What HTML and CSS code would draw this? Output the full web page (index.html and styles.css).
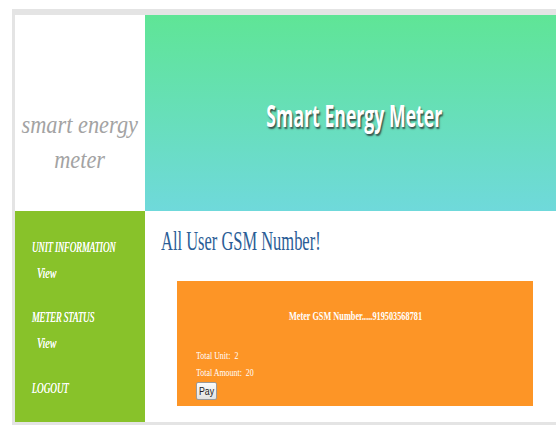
FILE: index.html
```html
<!DOCTYPE html>
<html lang="en">
<head>
<meta charset="utf-8">
<title>Smart Energy Meter</title>
<link rel="stylesheet" href="styles.css">
</head>
<body>
<div class="page">
  <div class="top">
    <div class="logo">
      <span class="logo-line">smart energy</span>
      <span class="logo-line">meter</span>
    </div>
    <header class="banner">
      <h1 class="banner-title">Smart Energy Meter</h1>
    </header>
  </div>
  <div class="body-row">
    <nav class="sidebar">
      <a class="nav-head nav-first" href="#"><span class="sq">UNIT INFORMATION</span></a>
      <a class="nav-sub" href="#"><span class="sq sq-wide">View</span></a>
      <a class="nav-head" href="#"><span class="sq">METER STATUS</span></a>
      <a class="nav-sub" href="#"><span class="sq sq-wide">View</span></a>
      <a class="nav-head nav-last" href="#"><span class="sq">LOGOUT</span></a>
    </nav>
    <main class="content">
      <h2 class="title"><span class="sq">All User GSM Number!</span></h2>
      <section class="meter-card">
        <p class="gsm"><span class="sq-c">Meter GSM Number.....919503568781</span></p>
        <p class="stat"><span class="sq sq-wide">Total Unit:&nbsp;&nbsp;2</span></p>
        <p class="stat"><span class="sq sq-wide">Total Amount:&nbsp;&nbsp;20</span></p>
        <button class="pay" type="button"><span class="sq-b">Pay</span></button>
      </section>
    </main>
  </div>
</div>
</body>
</html>
```

FILE: styles.css
```css
html, body {
  margin: 0;
  padding: 0;
  overflow: hidden;
  background: #ffffff;
}

body {
  font-family: "Liberation Serif", serif;
}

.page {
  margin: 9px 0 0 12px;
  width: 549px;
  border-style: solid;
  border-color: #e4e4e4;
  border-width: 6px 3px 3px 3px;
  background: #ffffff;
}

/* narrow faces */
.sq {
  display: inline-block;
  transform: scaleX(0.61);
  transform-origin: left center;
  white-space: nowrap;
}

.sq-wide {
  transform: scaleX(0.72);
}

.sq-c {
  display: inline-block;
  transform: scaleX(0.69);
  transform-origin: center center;
  white-space: nowrap;
}

.sq-b {
  display: inline-block;
  transform: scaleX(0.8);
  transform-origin: center center;
}

/* top band */
.top {
  display: flex;
  height: 196px;
}

.logo {
  width: 130px;
  box-sizing: border-box;
  padding-top: 92px;
  display: flex;
  flex-direction: column;
  align-items: center;
  font-style: italic;
  font-size: 26px;
  line-height: 35px;
  color: #a3a3a3;
}

.logo-line {
  display: block;
  white-space: nowrap;
  transform: scaleX(0.86);
}

.banner {
  flex: 1;
  display: flex;
  align-items: center;
  justify-content: center;
  background: linear-gradient(to bottom, #5fe596 0%, #6fd9db 100%);
}

.banner-title {
  margin: 0;
  padding-top: 3px;
  font-family: "Open Sans", sans-serif;
  font-weight: 700;
  font-size: 31px;
  line-height: 40px;
  color: #ffffff;
  white-space: nowrap;
  transform: scaleX(0.57);
  text-shadow: 2px 2px 2px rgba(40, 40, 40, 0.75);
}

/* lower band */
.body-row {
  display: flex;
  height: 211px;
}

.sidebar {
  width: 130px;
  flex: none;
  box-sizing: border-box;
  padding: 27px 0 0 17px;
  background: #88c22a;
  display: flex;
  flex-direction: column;
  align-items: flex-start;
}

.sidebar a {
  color: #ffffff;
  text-decoration: none;
  font-style: italic;
  display: block;
  line-height: 18px;
  text-shadow: 0 0 0.4px #ffffff;
}

.nav-head {
  font-size: 15px;
  margin-top: 25px;
}

.nav-first {
  margin-top: 0;
}

.nav-last {
  margin-top: 26px;
}

.nav-sub {
  font-size: 14px;
  margin-top: 9px;
  margin-left: 5px;
}

.content {
  flex: 1;
  padding: 15px 31px 0 32px;
}

.title {
  margin: 0 0 0 -16px;
  font-weight: 400;
  font-size: 27px;
  line-height: 30px;
  color: #2b5d96;
}

.meter-card {
  margin-top: 25px;
  background: #fd9526;
  color: #ffffff;
  padding: 28px 19px 6px 19px;
  height: 125px;
  box-sizing: border-box;
}

.meter-card p {
  margin: 0;
}

.gsm {
  text-align: center;
  font-weight: 700;
  font-size: 12px;
  line-height: 14px;
  margin-bottom: 24px !important;
}

.stat {
  font-size: 11px;
  line-height: 17px;
}

.pay {
  display: block;
  margin-top: 1px;
  width: 21px;
  height: 18px;
  padding: 0;
  font-family: "Liberation Sans", sans-serif;
  font-size: 11px;
  color: #222222;
  background: linear-gradient(to bottom, #fbfbfb 0%, #e3e3e3 100%);
  border: 1px solid #9a9a9a;
  border-radius: 2px;
}
```
